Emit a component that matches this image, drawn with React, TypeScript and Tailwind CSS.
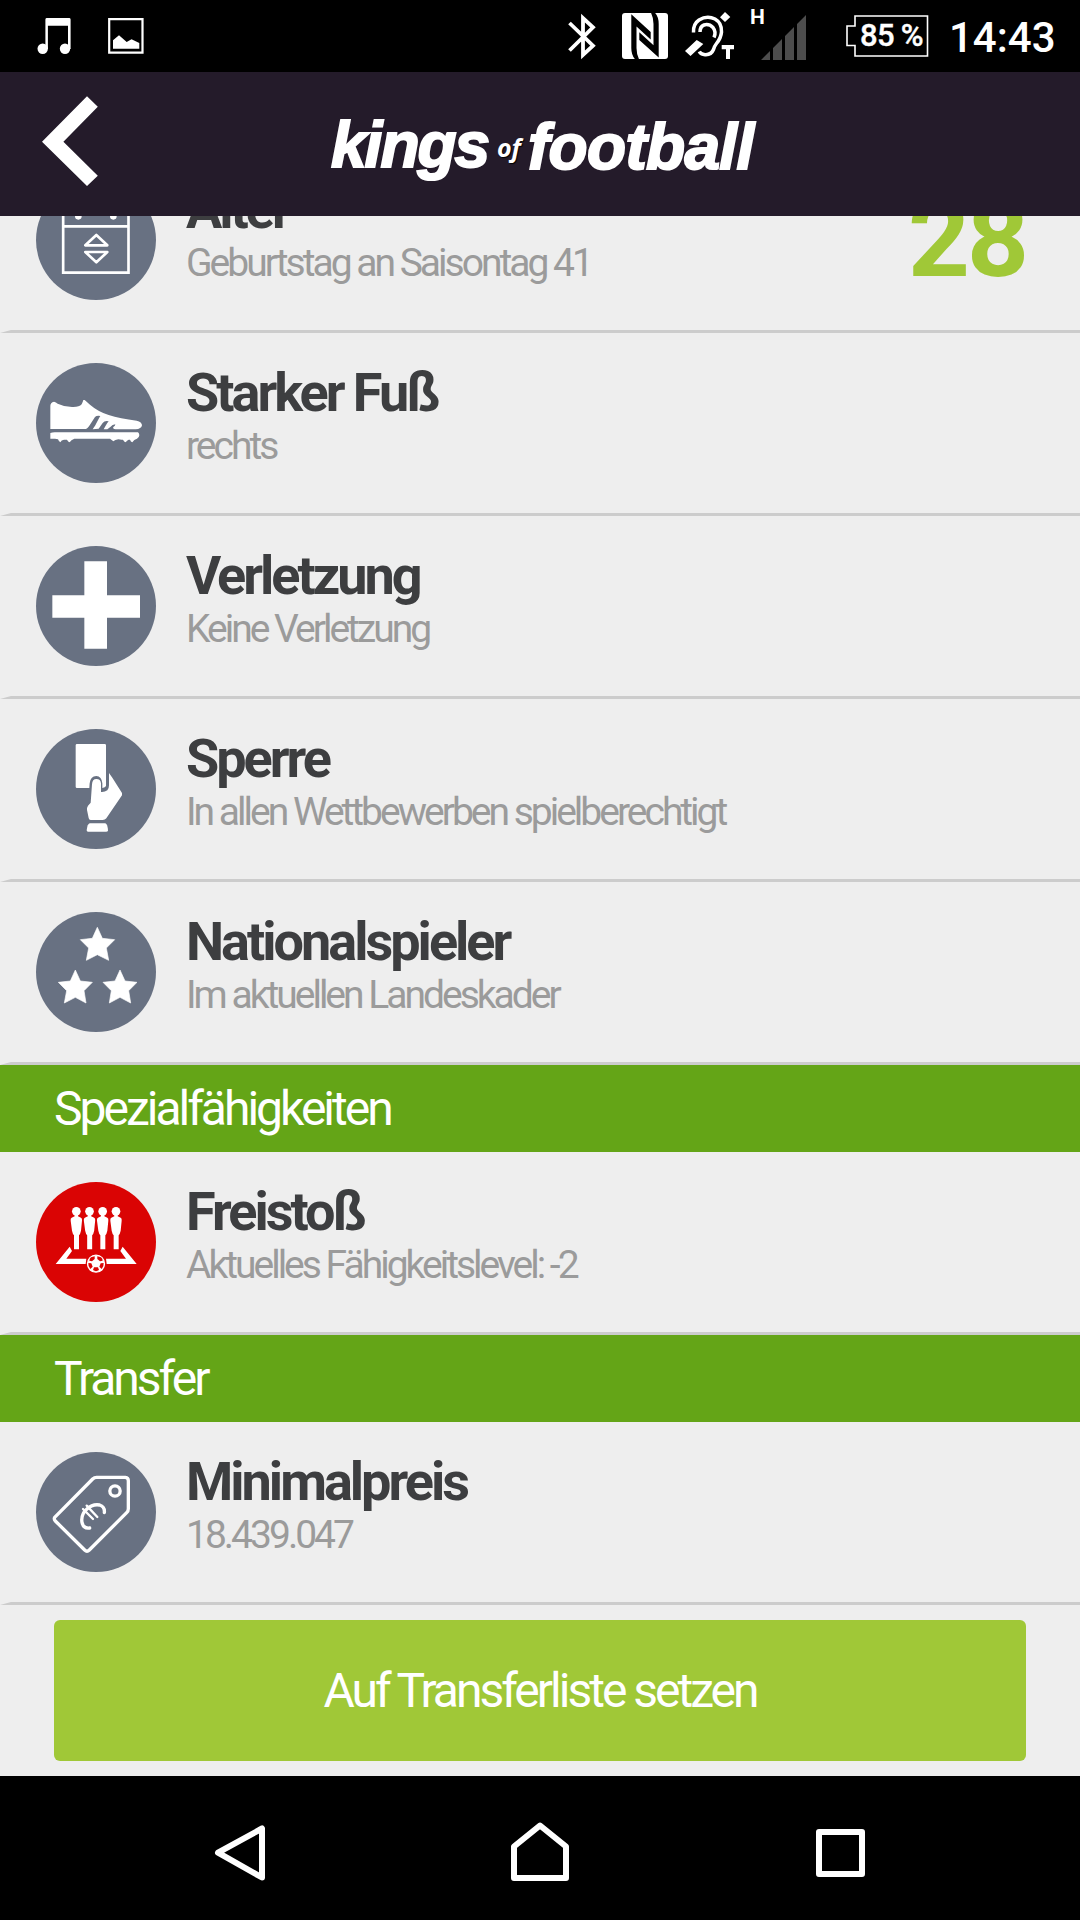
import type { ReactNode } from 'react';

const CalendarIcon = () => (
    <svg viewBox="0 0 360 360" className="size-full" fill="none" stroke="#fff" strokeWidth="8">
        <path d="M81.500 80H277.500V278H81.500ZM81.500 139H277.500" />
        <path d="M127 84V109M232 84V109" strokeWidth="20" strokeLinecap="round" />
        <path d="M181 165L148 196H214ZM181 247L148 216H214Z" strokeLinejoin="round" />
    </svg>
);

const ShoeIcon = () => (
    <svg viewBox="48 39 360 360" className="size-full" fill="#fff">
        <path d="M91 237V168Q91 157 102 155Q108 157 113 161Q136 172 160 171Q178 171 185 163Q188 157 190 150H194L210 164Q233 184 266 195Q300 206 350 212Q366 216 366 226Q364 237 347 238H287Q277 236 280 231Q286 228 286 223Q277 224 271 231L262 238H251L256 229Q261 219 266 214Q254 211 248 219L236 236L218 238L226 226Q236 206 241 198Q230 196 225 201L207 229Q201 237 198 237Z" />
        <path d="M91 249Q97 247 104 247H354Q358 250 358 256Q357 264 351 266Q342 268 337 277Q332 276 330 269H326Q321 271 317 277Q312 276 309 269H305Q300 268 295 268Q285 270 280 274L270 266H163Q153 269 149 277Q144 276 141 269H132Q124 270 121 277Q117 276 114 268L105 266H91Z" />
    </svg>
);

const CrossIcon = () => (
    <svg viewBox="48 588 360 360" className="size-full" fill="#fff">
        <path d="M193 634H261V736H360V803H261V896H193V803H97V736H193Z" />
    </svg>
);

const CardIcon = () => (
    <svg viewBox="48 27 360 360" className="size-full" fill="#fff">
        <path d="M171 72H254Q258 72 258 76V198Q256 203 247 204V190Q245 169 229 168Q211 169 209 190L208 204H171Q167 204 167 200V76Q167 72 171 72Z" />
        <path d="M216 193Q217 177 229 177Q242 177 243 190V216Q254 217 262 211Q267 205 267 196V159L277 173L306 219V226L259 295Q255 300 248 300H212Q207 300 206 294L201 270Q200 263 204 257L212 248Z" />
        <path d="M209 310H256Q263 313 264 332Q263 335 258 335H204Q200 335 200 331Q202 312 209 310Z" />
    </svg>
);

const StarsIcon = () => (
    <svg viewBox="48 576 360 360" className="size-full" fill="#fff" stroke="#fff" strokeWidth="2" strokeLinejoin="round">
        <path d="M232 622L247 655L284 659L259 684L266 721L232 704L199 721L206 684L181 659L217 655Z" />
        <path d="M166 750L181 783L217 787L192 812L198 849L166 832L133 849L140 812L115 787L151 783Z" />
        <path d="M300 750L315 783L351 787L326 812L332 849L300 832L268 849L274 812L249 787L285 783Z" />
    </svg>
);

const FreeKickIcon = () => (
    <svg viewBox="48 36 360 360" className="size-full" fill="#fff">
        {[169, 208.5, 248, 288].map((x) => (
            <g key={x} transform={`translate(${x} 0)`}>
                <circle cy="124" r="13" />
                <path d="M-5 132H5V139L14 143Q18 144 17 152L14 182Q12 192 8 196V238H-7V196Q-11 192 -13 182L-17 152Q-18 144 -14 143L-5 139Z" />
            </g>
        ))}
        <path d="M149 230L156 243L139 266H199L197 282H107ZM308 230L301 243L318 266H258L260 282H350Z" />
        <circle cx="228" cy="281" r="25.500" stroke="#fff" strokeWidth="4" />
        <g fill="#da0404">
            <path d="M213 262L224 259V267L216 274L208 272Q208 266 213 262Z" />
            <path d="M243 262L232 259V267L240 274L248 272Q248 266 243 262Z" />
            <path d="M205 279L214 280L218 290L211 297Q204 290 205 279Z" />
            <path d="M251 279L242 280L238 290L245 297Q252 290 251 279Z" />
            <path d="M222 292H234L237 300Q228 307 219 300Z" />
        </g>
    </svg>
);

const PriceTagIcon = () => (
    <svg viewBox="48 36 360 360" className="size-full" fill="none" stroke="#fff" strokeWidth="10" strokeLinejoin="round" strokeLinecap="round">
        <path d="M104 232L218 117Q223 112 230 112H316Q325 113 325 122V206Q325 213 320 218L208 330Q201 337 194 330L106 243Q101 238 104 232Z" />
        <circle cx="285" cy="153" r="15.5" />
        <path d="M209 264Q190 267 186 247Q182 225 200 208Q218 191 239 195Q255 200 253 218" strokeWidth="10" />
        <path d="M189 207L219 237M200 197L232 231" strokeWidth="7" />
    </svg>
);

const BatteryIcon = () => (
    <div className="relative ml-[39px] h-[42px] w-[83px]">
        <svg viewBox="846 15 83 42" className="size-full" fill="none" stroke="#fff" strokeWidth="1.600">
            <path d="M855 16H927.500V56H855V45.500H847V26H855Z" />
        </svg>
        <span className="absolute inset-0 pt-px pl-[14px] text-[31px] leading-[40px] font-medium tracking-[-0.7px] whitespace-nowrap [-webkit-text-stroke:0.4px_#fff]">
            85 %
        </span>
    </div>
);

function StatusBar() {
    return (
        <div className="flex h-[72px] items-center bg-black text-white">
            <svg viewBox="37 0 35 72" className="ml-[37px] h-[72px] w-[35px]" fill="#fff">
                <circle cx="42.700" cy="48.700" r="5.200" />
                <circle cx="65" cy="48.700" r="5.200" />
                <path d="M46.500 18H69.500Q70.600 18 70.600 19.500V49H68V25.800H47.900V49H45.400V19.500Q45.400 18 46.500 18Z" />
            </svg>
            <svg viewBox="107 0 38 72" className="ml-[35px] h-[72px] w-[38px]" fill="#fff">
                <path d="M109.200 19.200H142.500V52.600H109.200Z" fill="none" stroke="#fff" strokeWidth="2.200" />
                <path d="M113 48.700V40.300L119 35.300L126.700 42L131.500 39.300L139.300 43V48.700Z" />
            </svg>

            <svg viewBox="566 0 32 72" className="ml-[421px] h-[72px] w-8" fill="none" stroke="#fff" strokeWidth="3.800">
                <path d="M569.500 23L593 45.700L583 55V18L593 27.300L569.500 50.500" />
            </svg>
            <svg viewBox="622 0 46 72" className="ml-6 h-[72px] w-[46px]" fill="#000">
                <rect x="622" y="13" width="46" height="46" rx="3" fill="#fff" />
                <path d="M631.300 14.200V48Q631.300 55 635 59.200H639Q636.500 54 636.500 48V26.500L650.700 39.500V32Z" />
                <path d="M658.700 57.600V24Q658.700 17 655 12.800H651Q653.500 18 653.500 24V45.300L639.300 32.300V40Z" />
            </svg>
            <svg viewBox="684 0 52 72" className="ml-4 h-[72px] w-[52px]" fill="none" stroke="#fff" strokeWidth="3.500">
                <path d="M693.500 32.500Q693 24 699 20Q707 15 715 19Q722 23 721.500 32Q721 38 716.500 43.500Q714.500 46 713.500 49.500Q711 55.500 704 54.500Q700.500 54 699.300 51.500" />
                <path d="M700 32Q700 26.500 704 25Q709 23.500 713 27.500Q716.500 32 714 37.500" />
                <path d="M685 51L696.700 40L703.300 44L690.500 56ZM725 12L730.300 17L725 22L720 17.300ZM721.700 45H734V49.300H730V59H726V49.300H721.700Z" fill="#fff" stroke="none" />
            </svg>
            <span className="ml-[14px] h-[64px] w-[15px] text-[21px] leading-[27px] font-bold">H</span>
            <svg viewBox="761 0 46 72" className="-ml-[4px] h-[72px] w-[46px]" fill="#4d4d4d">
                <path d="M761 60L770 51V60ZM773 48L782 39V60H773ZM785 36L794 27V60H785ZM797 24L806 15V60H797Z" />
            </svg>
            <BatteryIcon />
            <span className="ml-[20px] pt-[3px] text-[42px] leading-none font-medium whitespace-nowrap">14:43</span>
        </div>
    );
}

function Header() {
    return (
        <header className="relative z-10 flex h-36 items-start bg-[#241b2a] text-white">
            <svg viewBox="42 72 56 144" className="ml-[42px] h-36 w-14" fill="#fff">
                <path d="M87 96.300L97.800 106.700L63.400 141.700L97.800 175.700L87 186L42 141.700Z" />
            </svg>
            <div className="ml-[233px] flex items-baseline pt-[36px] font-['Liberation_Sans',sans-serif] text-[64px] leading-[74px] font-bold whitespace-nowrap italic">
                <span className="w-[160px] tracking-[-2px] [-webkit-text-stroke:2px_#fff]">kings</span>
                <span className="relative -top-[10px] w-[37px] pl-[6px] font-['Open_Sans'] text-[25px] leading-none font-bold [text-shadow:1px_1px_1px_#000]">of</span>
                <span className="relative top-[2px] tracking-[-0.7px] [-webkit-text-stroke:2px_#fff]">football</span>
            </div>
        </header>
    );
}

type RowProps = {
    icon: ReactNode;
    title: string;
    text: string;
    value?: string;
    color?: string;
};

function Row({ icon, title, text, value, color = 'bg-[#687182]' }: RowProps) {
    return (
        <div>
            <div className="flex h-[180px] items-start px-9">
                <div className={`mt-[30px] size-[120px] shrink-0 overflow-hidden rounded-full ${color}`}>{icon}</div>
                <div className="ml-[30px] flex-1 pt-8 whitespace-nowrap">
                    <h3 className="text-[54px] leading-[56px] font-bold tracking-[-3px] text-[#3d3e40]">{title}</h3>
                    <p className="text-[39px] leading-[51px] tracking-[-3px] text-[#9b9b9b]">{text}</p>
                </div>
                {value && (
                    <span className="mt-[35px] mr-[18px] text-[108px] leading-none font-bold tracking-[-3px] text-[#a0c837]">{value}</span>
                )}
            </div>
            {/* divider with a bevelled left end */}
            <div className="h-[3px] bg-[#ccc] [clip-path:polygon(11px_0,100%_0,100%_100%,0_100%)]" />
        </div>
    );
}

function SectionTitle({ children }: { children: ReactNode }) {
    return <h2 className="h-[87px] bg-[#64a517] pl-[54px] text-[48px] leading-[87px] tracking-[-3px] text-white">{children}</h2>;
}

function NavBar() {
    return (
        <nav className="flex h-36 items-center bg-black">
            <svg viewBox="210 1776 60 144" className="ml-[210px] h-36 w-[60px]" fill="none" stroke="#fff" strokeWidth="6" strokeLinejoin="round">
                <path d="M262 1828.500V1877.500L218 1852.700Z" />
            </svg>
            <svg viewBox="510 1776 60 144" className="ml-[240px] h-36 w-[60px]" fill="none" stroke="#fff" strokeWidth="6" strokeLinejoin="round">
                <path d="M514 1878V1846.500L540 1825.500L566 1846.500V1878Z" />
            </svg>
            <svg viewBox="810 1776 60 144" className="ml-[240px] h-36 w-[60px]" fill="none" stroke="#fff" strokeWidth="6" strokeLinejoin="round">
                <path d="M819 1832H862V1874H819Z" />
            </svg>
        </nav>
    );
}

export default function App() {
    return (
        <div className="flex h-[1920px] w-[1080px] flex-col overflow-hidden bg-[#eee] font-['Roboto',sans-serif]">
            <StatusBar />
            <Header />
            <main className="flex-1 overflow-hidden">
                {/* the list is scrolled, so its first row is partly under the header */}
                <div className="-mt-[66px]">
                    <Row icon={<CalendarIcon />} title="Alter" text="Geburtstag an Saisontag 41" value="28" />
                    <Row icon={<ShoeIcon />} title="Starker Fuß" text="rechts" />
                    <Row icon={<CrossIcon />} title="Verletzung" text="Keine Verletzung" />
                    <Row icon={<CardIcon />} title="Sperre" text="In allen Wettbewerben spielberechtigt" />
                    <Row icon={<StarsIcon />} title="Nationalspieler" text="Im aktuellen Landeskader" />
                    <SectionTitle>Spezialfähigkeiten</SectionTitle>
                    <Row icon={<FreeKickIcon />} title="Freistoß" text="Aktuelles Fähigkeitslevel: -2" color="bg-[#da0404]" />
                    <SectionTitle>Transfer</SectionTitle>
                    <Row icon={<PriceTagIcon />} title="Minimalpreis" text="18.439.047" />
                </div>
                <div className="px-[54px] pt-[15px]">
                    <button className="block h-[141px] w-full rounded-md bg-[#a0c837] text-[48px] tracking-[-3px] text-white">
                        Auf Transferliste setzen
                    </button>
                </div>
            </main>
            <NavBar />
        </div>
    );
}
